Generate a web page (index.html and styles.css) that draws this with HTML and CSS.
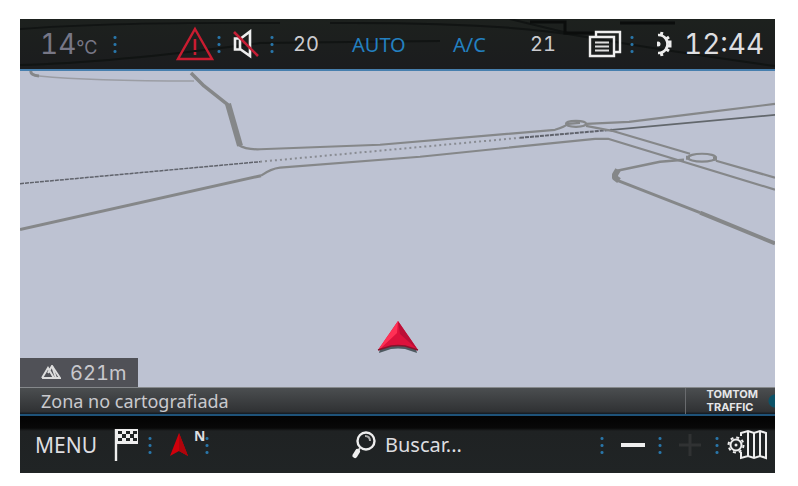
FILE: index.html
```html
<!DOCTYPE html>
<html lang="es">
<head>
<meta charset="utf-8">
<meta name="viewport" content="width=device-width, initial-scale=1">
<title>Navegación</title>
<link rel="stylesheet" href="styles.css">
</head>
<body>
<main class="screen">
  <header class="topbar">
    <svg class="streaks" viewBox="0 0 755 50" preserveAspectRatio="none" aria-hidden="true">
      <path d="M0 10Q90 3 260 4M0 46Q90 44 240 24L420 22M310 4Q480 3 560 17T755 47M490 0L560 17" fill="none" stroke="#111413" stroke-width="2"/>
      <path d="M510 3H545V14H580M600 4H655" fill="none" stroke="#0b0d0c" stroke-width="3"/>
    </svg>
    <span class="temp">14<small>°C</small></span>
    <i class="dots"></i>
    <button class="icon" aria-label="Avisos"><svg width="38" height="36" viewBox="0 0 38 36"><path d="M19 3L36 33H2Z" fill="none" stroke="#c91c30" stroke-width="2.4"/><path d="M19 13V24M19 26V29" stroke="#c91c30" stroke-width="2.6"/></svg></button>
    <i class="dots"></i>
    <button class="icon" aria-label="Silencio"><svg width="28" height="30" viewBox="0 0 28 30"><path d="M3 9.500H8V20.500H3ZM8 10L18 2.500V27L8 20" fill="none" stroke="#eee" stroke-width="2.600"/><path d="M2 3L26 27" stroke="#c51f36" stroke-width="2.600"/></svg></button>
    <i class="dots"></i>
    <span class="degree">20</span>
    <button class="mode">AUTO</button>
    <button class="mode">A/C</button>
    <span class="degree">21</span>
    <button class="icon" aria-label="Ventanas"><svg width="34" height="30" viewBox="0 0 34 30"><path d="M8 8V3H32V23H27M2 8H26V27H2Z" fill="none" stroke="#eee" stroke-width="2.400"/><path d="M7 13.500H21M7 17.500H21M7 21.500H21" stroke="#ddd" stroke-width="2"/></svg></button>
    <i class="dots"></i>
    <button class="icon" aria-label="Ajustes"><svg width="16" height="28" viewBox="0 0 16 28"><path d="M0 5A9 9 0 0 1 8 9Q11 14 8 19A9 9 0 0 1 0 23" transform="translate(1)" fill="none" stroke="#eee" stroke-width="2.600"/><path d="M4 6L5 2M9 9L12 7M9 19L12 21M4 22L5 26M10 12H13V16H10" fill="none" stroke="#eee" stroke-width="3"/><circle cx="1" cy="14" r="2.500" fill="#eee"/></svg></button>
    <time class="clock">12:44</time>
  </header>

  <section class="map" aria-label="Mapa">
    <svg class="roads" viewBox="0 0 755 317" preserveAspectRatio="none" aria-hidden="true">
      <g fill="none" stroke="#858789" stroke-width="2.200" stroke-linejoin="round">
        <path d="M11 0Q10 4 19 5Q70 10 174 10" stroke="#9b9da4" stroke-width="1.600"/>
        <path d="M11 0Q10 4 19 5" stroke-width="3"/>
        <path d="M171 2L184 15L208 34" stroke-width="3.500"/>
        <path d="M208 33L220 75" stroke-width="6"/>
        <path d="M218 74Q226 79 240 78.500L360 74L535 59Q545 56 548 53L560 52"/>
        <path d="M0 159L241 105" stroke-width="3"/>
        <path d="M241 105Q251 98 260 97L400 86L575 68H588L755 119"/>
        <path d="M0 113L240 91" stroke="#60636c" stroke-width="1.500" stroke-dasharray="4 1"/>
        <path d="M240 91L500 67" stroke="#888b92" stroke-width="2" stroke-dasharray="2 3"/>
        <path d="M500 67L592 59" stroke="#60636c" stroke-width="2" stroke-dasharray="4 1"/>
        <path d="M592 59L755 44" stroke="#62676c" stroke-width="1.800"/>
        <ellipse cx="556" cy="53" rx="10" ry="3"/>
        <path d="M566 53L609 51L690 41L755 33M566 55L592 60L670 83M696 90L755 107"/>
        <ellipse cx="682" cy="87" rx="14" ry="4"/>
        <path d="M668 85V89M695 86V90" stroke-width="4"/>
        <path d="M664 89L640 91L597 100" stroke-width="2.500"/>
        <path d="M598 99L595 104V107L599 110" stroke-width="6"/>
        <path d="M598 110L680 142" stroke-width="3"/>
        <path d="M680 142L755 173" stroke-width="4"/>
      </g>
    </svg>
    <svg class="marker" viewBox="0 0 42 38" aria-label="Posición actual"><path d="M3 31L2 35L14 31Q21 30 28 31L40 35L39 31L21 24Z" fill="#4e5a61"/><path d="M21 3L1 32L14 28Q21 27 28 28L41 32Z" fill="#dd123c"/><path d="M21 3L20 15L4 30L1 32Z" fill="#ff3055"/><path d="M21 3L41 32L23 16Z" fill="#bb0e36"/><path d="M1 32L14 28Q21 27 28 28L41 32" fill="none" stroke="#86142c" stroke-width="1.500"/></svg>
    <p class="altitude"><svg width="20" height="15" viewBox="0 0 20 15" aria-hidden="true"><path d="M1 13L7 3L13 13M1 13H19L11 1L7 8" fill="none" stroke="#ddd" stroke-width="2"/><path d="M11 1L15 13" stroke="#ddd" stroke-width="2"/></svg>621m</p>
  </section>

  <section class="info">
    <p class="zone">Zona no cartografiada</p>
    <p class="traffic">TOMTOM<br>TRAFFIC</p>
  </section>

  <nav class="bottombar">
    <button class="menu">MENU</button>
    <button class="icon" aria-label="Destino"><svg width="26" height="34" viewBox="0 0 26 34"><path d="M2 1V33" stroke="#eee" stroke-width="2.400"/><path d="M1 1H24V16H1Z" fill="#eee"/><path d="M4 3h4v3H4zM12 3h4v3h-4zM19 3h4v3h-4zM8 6h4v4H8zM16 6h4v4h-4zM4 10h4v3H4zM12 10h4v3h-4zM19 10h4v3h-4z" fill="#202424"/></svg></button>
    <i class="dots"></i>
    <button class="icon" aria-label="Orientación"><svg width="20" height="26" viewBox="0 0 20 26"><path d="M10 1L19 24L10 19L1 24Z" fill="#d0000b"/><path d="M10 1L19 24L10 19Z" fill="#b0040b"/></svg></button>
    <span class="north">N</span>
    <i class="dots"></i>
    <label class="search"><svg width="26" height="28" viewBox="0 0 26 28" aria-hidden="true"><circle cx="15" cy="10" r="8.500" fill="none" stroke="#eee" stroke-width="2.400"/><path d="M14 5Q19 5 19 10" fill="none" stroke="#aaa" stroke-width="2"/><path d="M9 17L7 20" stroke="#ddd" stroke-width="2"/><path d="M6.500 20.500L4 24.500" stroke="#eee" stroke-width="5" stroke-linecap="round"/></svg><input type="text" placeholder="Buscar..." aria-label="Buscar"></label>
    <i class="dots"></i>
    <button class="icon" aria-label="Alejar"><svg width="24" height="24" viewBox="0 0 24 24"><path d="M0 12H24" stroke="#eee" stroke-width="4"/></svg></button>
    <i class="dots"></i>
    <button class="icon" aria-label="Acercar"><svg width="24" height="24" viewBox="0 0 24 24"><path d="M1 12H23M12 1V23" stroke="#303233" stroke-width="3"/></svg></button>
    <i class="dots"></i>
    <button class="icon" aria-label="Opciones del mapa"><svg width="41" height="32" viewBox="0 0 41 32"><path d="M14 7V4L21 2L27 4L33 2L39 4V29L33 27L27 29L21 27L14 29V23M21 2V27M27 4V29M33 2V27" fill="none" stroke="#eee" stroke-width="2"/><circle cx="9" cy="16" r="5.500" fill="#202425" stroke="#eee" stroke-width="2"/><circle cx="9" cy="16" r="7.500" fill="none" stroke="#eee" stroke-width="2" stroke-dasharray="3 2.890"/><circle cx="9" cy="16" r="1.500" fill="#eee"/></svg></button>
  </nav>
</main>
</body>
</html>
```
FILE: styles.css
```css
* { box-sizing: border-box; }

body {
  margin: 0;
  min-height: 100vh;
  padding: 19px 23px 13px 20px;
  display: flex;
  background: #fff;
  color: #dedee0;
  font-family: "Noto Sans", "Open Sans", sans-serif;
  font-size: 20px;
}

p { margin: 0; }
svg { display: block; flex: none; }

button, input {
  padding: 0;
  border: 0;
  background: none;
  color: inherit;
  font: inherit;
  text-align: left;
}

.screen {
  flex: 1;
  min-width: 0;
  display: flex;
  flex-direction: column;
  overflow: hidden;
  background: #1d2021;
}

.topbar, .bottombar {
  display: grid;
  align-items: center;
  white-space: nowrap;
}

.topbar > *, .bottombar > * { min-width: 0; }

.topbar {
  position: relative;
  height: 52px;
  padding-left: 20px;
  grid-template-columns: 73fr 63fr 41fr 15fr 38fr 23fr 59fr 101fr 77fr 58fr 42fr 27fr 27fr 91fr;
  border-bottom: 2px solid #477fae;
  background: linear-gradient(#1d211e, #1b1c1e);
}

.topbar > * { position: relative; }

.topbar > .streaks {
  position: absolute;
  inset: 0;
  width: 100%;
  height: 100%;
}

.temp, .degree, .clock, .altitude {
  font-family: Inter, sans-serif;
  font-variant-numeric: tabular-nums;
}

.temp { color: #777786; font-size: 28px; }
.temp small { font-size: 18px; }
.degree { color: #cbcbd0; font-size: 20px; }
.mode { color: #2380c0; }
.clock { font-size: 28px; }

.dots {
  width: 4px;
  height: 20px;
  background: radial-gradient(circle, #2876aa 1px, transparent 2px) 0 0 / 4px 7px;
}

.map {
  position: relative;
  flex: 1;
  min-height: 0;
  background: #bdc2d2;
}

.roads {
  position: absolute;
  inset: 0;
  width: 100%;
  height: 100%;
}

.marker {
  position: absolute;
  left: 50%;
  bottom: 31px;
  width: 42px;
  transform: translateX(-50%);
}

.altitude {
  position: absolute;
  left: 0;
  bottom: 0;
  display: flex;
  align-items: center;
  gap: 9px;
  height: 29px;
  padding: 0 12px 0 21px;
  background: #505157;
  color: #c8c8cd;
  font-size: 20px;
}

.info {
  display: flex;
  align-items: center;
  justify-content: space-between;
  height: 29px;
  border-top: 1px solid #85888b;
  border-bottom: 2px solid #1e5278;
  background: linear-gradient(#4b4e50, #303234 90%, #101820);
}

.zone { padding-left: 21px; color: #c9c9cd; font-size: 18px; line-height: 26px; }

.traffic {
  padding: 0 17px 0 21px;
  border-left: 1px solid #696b6e;
  background: radial-gradient(circle at 100% 50%, #0c5268 6px, transparent 7px);
  color: #e6e6e8;
  font: 700 11px/13px Inter, sans-serif;
}

.bottombar {
  height: 57px;
  padding-left: 15px;
  grid-template-columns: 79fr 34fr 21fr 25fr 11fr 146fr 249fr 21fr 37fr 20fr 37fr 12fr 48fr;
  background: linear-gradient(#030303 0, #080808 12px, #1f2223 15px, #202425 100%);
}

.menu { font-size: 21px; }
.north { padding-bottom: 17px; font-size: 14px; font-weight: 700; line-height: 14px; }

.search { display: flex; align-items: center; gap: 8px; }
.search input { width: 100%; min-width: 0; }
.search input::placeholder { color: #dedee0; opacity: 1; }
```
